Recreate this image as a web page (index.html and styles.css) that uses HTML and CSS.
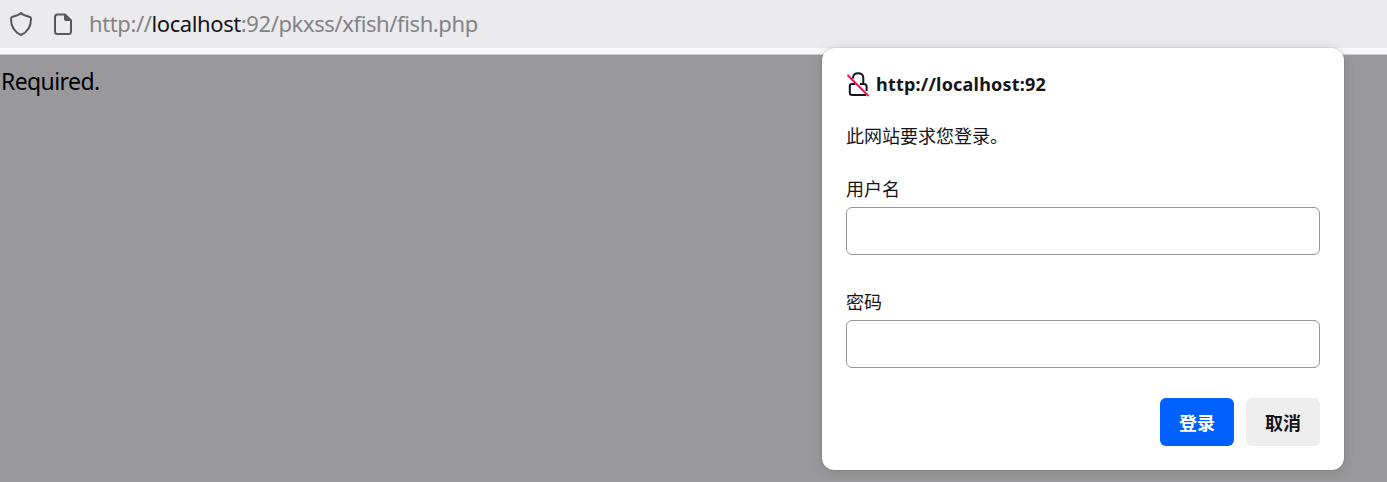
FILE: index.html
```html
<!DOCTYPE html>
<html lang="zh-CN">
<head>
<meta charset="utf-8">
<title>localhost:92</title>
<link rel="stylesheet" href="styles.css">
</head>
<body>
<header class="urlbar">
  <svg class="shield" width="24" height="26" viewBox="0 0 24 26"><path d="M12 2Q14 4.200 21 6Q22 6.300 22 8C22 15.500 18.500 21 12 24C5.500 21 2 15.500 2 8Q2 6.300 3 6Q10 4.200 12 2Z"/></svg>
  <svg class="page-icon" width="20" height="26" viewBox="0 0 20 26"><path d="M4.500 3.500H12L18 9.500V20.500Q18 23 15.500 23H4.500Q2 23 2 20.500V6Q2 3.500 4.500 3.500Z"/><path class="fold" d="M11 3H12.500L18.500 9V10H13Q11 10 11 8Z"/></svg>
  <div class="url">http://<span class="host">localhost</span>:92/pkxss/xfish/fish.php</div>
</header>
<main class="content"><p class="message">Required.</p></main>
<form class="dialog">
  <div class="origin">
    <svg class="lock" width="24" height="26" viewBox="0 0 24 26"><path d="M7 7.500V6.500A5.200 4.800 0 0 1 17.300 6.500V13M9.500 13H6Q3.800 13 3.800 15.200V21.500Q3.800 24 6.200 24H20M14 13H18Q20.600 13 20.600 15.500V20"/><path class="slash" d="M1.500 4L22.500 25"/></svg>
    <span class="origin-text">http://localhost:92</span>
  </div>
  <p class="prompt">此网站要求您登录。</p>
  <label class="field"><span class="label">用户名</span><input class="input" type="text"></label>
  <label class="field password"><span class="label">密码</span><input class="input" type="password"></label>
  <div class="actions"><button class="button primary" type="button">登录</button><button class="button" type="button">取消</button></div>
</form>
</body>
</html>
```
FILE: styles.css
```css
* { box-sizing: border-box; }
body { margin: 0; height: 482px; overflow: hidden; display: flex; flex-direction: column; background: #99999b; font-family: "Noto Sans", "Noto Sans CJK SC", sans-serif; color: #15141a; }
p { margin: 0; }
svg { fill: none; stroke: #58585b; stroke-width: 2; stroke-linejoin: round; flex: none; }
.urlbar { height: 55px; flex: none; display: flex; align-items: flex-start; padding: 11px 0 0 9px; background: linear-gradient(#ebebed 48px, #f9f9fb 48px); border-bottom: 1px solid #ccccce; }
.page-icon { margin-left: 20px; }
.fold { fill: #58585b; stroke: none; }
.url { margin-left: 16px; font-size: 22px; line-height: 25px; letter-spacing: -0.4px; color: #838386; }
.host { color: #15141a; }
.message { padding: 10px 0 0 1px; font-size: 23px; line-height: 32px; letter-spacing: -0.6px; color: #000; }
.dialog { position: absolute; left: 822px; top: 48px; width: 522px; height: 422px; padding: 23px 24px 24px; display: flex; flex-direction: column; background: #fff; border-radius: 12px; box-shadow: 0 0 1px #0007, 0 2px 12px #0002; font-size: 18px; }
.origin { height: 26px; display: flex; align-items: center; gap: 6px; font-weight: 700; letter-spacing: 0.2px; }
.lock { stroke: #15141a; }
.slash { stroke: #f4124a; }
.prompt { margin-top: 25px; line-height: 28px; }
.field { display: block; margin-top: 25px; }
.password { margin-top: 33px; }
.label { display: block; line-height: 28px; }
.input { display: block; width: 100%; height: 48px; margin-top: 4px; border: 1px solid #97979a; border-radius: 6px; }
.actions { display: flex; justify-content: flex-end; gap: 12px; margin-top: auto; }
.button { width: 74px; height: 48px; padding: 0; border: 0; border-radius: 6px; background: #eee; color: #15141a; font: 700 18px "Noto Sans CJK SC", sans-serif; }
.primary { background: #0061fe; color: #fff; }
```
